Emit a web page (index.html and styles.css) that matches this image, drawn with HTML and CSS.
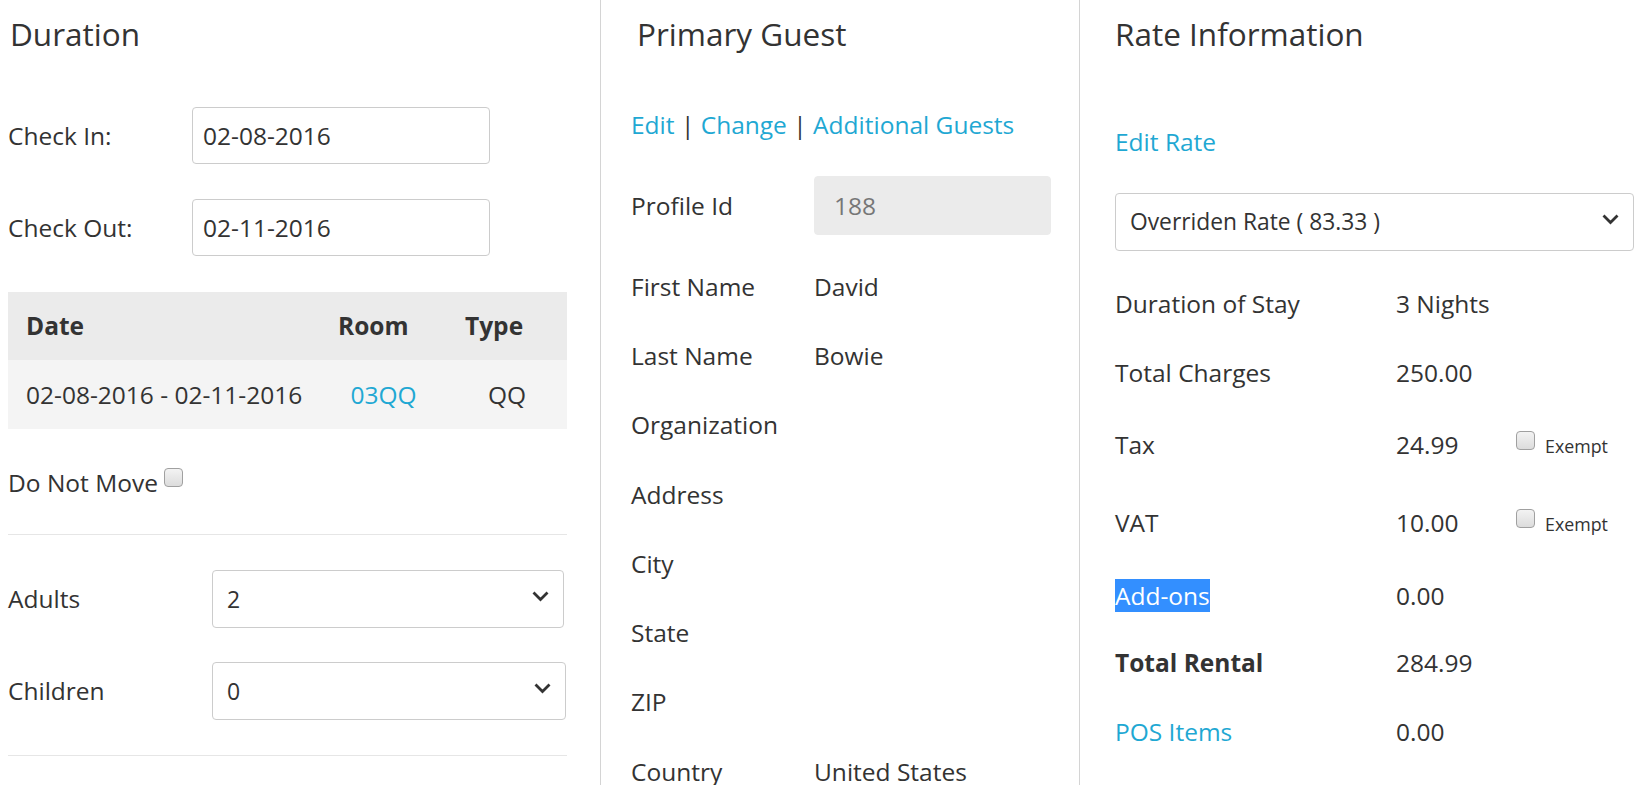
FILE: index.html
```html
<!DOCTYPE html>
<html>
<head>
<meta charset="utf-8">
<link rel="stylesheet" href="styles.css">
</head>
<body>
<div class="page">
  <section class="col col-left">
    <h3 class="heading heading-left">Duration</h3>
    <div class="form-row first-row">
      <label class="lbl lbl-date">Check In:</label>
      <div class="input date-input">02-08-2016</div>
    </div>
    <div class="form-row second-row">
      <label class="lbl lbl-date">Check Out:</label>
      <div class="input date-input">02-11-2016</div>
    </div>
    <div class="room-table">
      <div class="th">Date</div>
      <div class="th">Room</div>
      <div class="th">Type</div>
      <div class="td">02-08-2016 - 02-11-2016</div>
      <div class="td center"><a class="link">03QQ</a></div>
      <div class="td center">QQ</div>
    </div>
    <div class="dnm-row">
      <span>Do Not Move</span><span class="checkbox cb-dnm"></span>
    </div>
    <hr class="sep sep-1">
    <div class="form-row adults-row">
      <label class="lbl lbl-count">Adults</label>
      <div class="input select sel-adults">2<span class="chev"><svg width="17" height="11" viewBox="0 0 17 11"><path d="M1.5 1.5 L8.5 8.5 L15.5 1.5" fill="none" stroke="#333" stroke-width="2.8"/></svg></span></div>
    </div>
    <div class="form-row children-row">
      <label class="lbl lbl-count">Children</label>
      <div class="input select sel-children">0<span class="chev"><svg width="17" height="11" viewBox="0 0 17 11"><path d="M1.5 1.5 L8.5 8.5 L15.5 1.5" fill="none" stroke="#333" stroke-width="2.8"/></svg></span></div>
    </div>
    <hr class="sep sep-2">
  </section>

  <section class="col col-mid">
    <h3 class="heading heading-mid">Primary Guest</h3>
    <div class="links"><a class="link">Edit</a> | <a class="link">Change</a> | <a class="link">Additional Guests</a></div>
    <div class="form-row profile-row">
      <label class="lbl lbl-guest">Profile Id</label>
      <div class="input readonly">188</div>
    </div>
    <div class="guest-list">
      <div class="grow"><span class="lbl-guest">First Name</span><span>David</span></div>
      <div class="grow"><span class="lbl-guest">Last Name</span><span>Bowie</span></div>
      <div class="grow"><span class="lbl-guest">Organization</span><span></span></div>
      <div class="grow"><span class="lbl-guest">Address</span><span></span></div>
      <div class="grow"><span class="lbl-guest">City</span><span></span></div>
      <div class="grow"><span class="lbl-guest">State</span><span></span></div>
      <div class="grow"><span class="lbl-guest">ZIP</span><span></span></div>
      <div class="grow"><span class="lbl-guest">Country</span><span>United States</span></div>
    </div>
  </section>

  <section class="col col-right">
    <h3 class="heading">Rate Information</h3>
    <div class="edit-rate"><a class="link">Edit Rate</a></div>
    <div class="input select sel-rate">Overriden Rate ( 83.33 )<span class="chev"><svg width="17" height="11" viewBox="0 0 17 11"><path d="M1.5 1.5 L8.5 8.5 L15.5 1.5" fill="none" stroke="#333" stroke-width="2.8"/></svg></span></div>
    <div class="rate-list">
      <div class="rrow"><span class="rlbl">Duration of Stay</span><span class="rval">3 Nights</span></div>
      <div class="rrow"><span class="rlbl">Total Charges</span><span class="rval">250.00</span></div>
      <div class="rrow rrow-tax"><span class="rlbl">Tax</span><span class="rval">24.99</span><span class="checkbox"></span><span class="exempt">Exempt</span></div>
      <div class="rrow rrow-vat"><span class="rlbl">VAT</span><span class="rval">10.00</span><span class="checkbox"></span><span class="exempt">Exempt</span></div>
      <div class="rrow rrow-addons"><span class="rlbl"><span class="selected">Add-ons</span></span><span class="rval">0.00</span></div>
      <div class="rrow"><span class="rlbl bold">Total Rental</span><span class="rval">284.99</span></div>
      <div class="rrow"><span class="rlbl"><a class="link">POS Items</a></span><span class="rval">0.00</span></div>
    </div>
  </section>
</div>
</body>
</html>
```
FILE: styles.css
```css
* { box-sizing: border-box; }
html, body { margin: 0; padding: 0; background: #fff; }
body {
  font-family: "Open Sans", "DejaVu Sans", sans-serif;
  font-size: 24.5px;
  color: #333;
  line-height: 36px;
  overflow: hidden;
  height: 785px;
}
.page { display: flex; align-items: stretch; height: 785px; }
.col { height: 785px; }
.col-left { width: 601px; padding-left: 8px; padding-right: 33px; border-right: 1px solid #d4d4d4; }
.col-mid { width: 479px; padding-left: 30px; border-right: 1px solid #d4d4d4; }
.col-right { flex: 1; padding-left: 35px; padding-right: 17px; }

.heading {
  margin: 15px 0 0 0;
  font-size: 31.5px;
  font-weight: 400;
  line-height: 38px;
  color: #333;
}
.heading-left { margin-left: 2px; }
.heading-mid { margin-left: 6px; }

.link { color: #1fa8d3; text-decoration: none; }

.form-row { display: flex; align-items: center; }
.lbl { flex: none; }
.lbl-date { width: 184px; }
.lbl-count { width: 204px; }
.lbl-guest { width: 183px; flex: none; }

.input {
  border: 1px solid #ccc;
  border-radius: 4px;
  background: #fff;
  padding: 0 10px;
  display: flex;
  align-items: center;
  color: #333;
}
.date-input { width: 298px; height: 57px; }
.first-row { margin-top: 54px; }
.second-row { margin-top: 35px; }

.room-table {
  margin-top: 36px;
  display: grid;
  grid-template-columns: 312px 127px 1fr;
}
.th {
  background: #ebebeb;
  font-weight: 700;
  height: 68px;
  padding-left: 18px;
  display: flex;
  align-items: center;
}
.td {
  background: #f4f4f4;
  height: 69px;
  padding-left: 18px;
  display: flex;
  align-items: center;
}
.td.center { justify-content: center; padding-left: 0; }

.dnm-row { margin-top: 36px; display: flex; align-items: center; height: 36px; }
.checkbox {
  display: inline-block;
  width: 19px;
  height: 19px;
  border: 1px solid #a0a0a0;
  border-radius: 4px;
  background: linear-gradient(#f3f3f3, #dcdcdc);
  flex: none;
}
.cb-dnm { margin-left: 6px; margin-top: -12px; }

.sep { border: 0; border-top: 1px solid #e6e6e6; margin: 0; }
.sep-1 { margin-top: 33px; }
.sep-2 { margin-top: 35px; }

.select { position: relative; height: 58px; padding-right: 40px; font-size: 23px; padding-left: 14px; }
.chev { position: absolute; right: 14px; top: 50%; margin-top: -8px; height: 11px; line-height: 0; }
.sel-adults { width: 352px; }
.sel-children { width: 354px; }
.adults-row { margin-top: 35px; }
.children-row { margin-top: 34px; }

.links { margin-top: 54px; }
.profile-row { margin-top: 33px; }
.readonly { width: 237px; height: 59px; background: #ebebeb; border-color: #ebebeb; color: #777; padding-left: 19px; }
.guest-list { margin-top: 17px; }
.grow { display: flex; align-items: center; height: 69.3px; }

.edit-rate { margin-top: 71px; }
.sel-rate { margin-top: 33px; height: 58px; padding-left: 14px; font-size: 22.8px; }
.rate-list { margin-top: 18px; }
.rrow { display: flex; align-items: center; height: 69px; }
.rlbl { width: 281px; flex: none; }
.rval { width: 120px; flex: none; }
.rrow-tax { height: 75px; }
.rrow-vat { height: 81px; }
.rrow-addons { height: 65px; }
.rrow .checkbox { margin-top: -8px; }
.exempt { font-size: 17.8px; margin-left: 10px; margin-top: 3px; }
.bold { font-weight: 700; }
.selected { background: #338fff; color: #fff; }
```
